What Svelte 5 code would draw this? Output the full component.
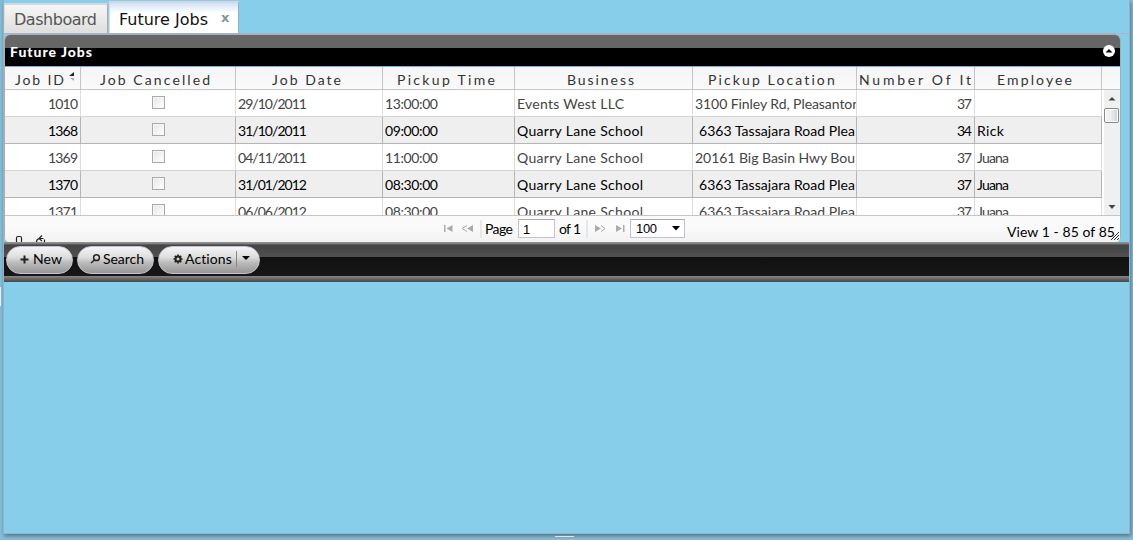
<script>
  const columns = [
    { label: 'Job ID', w: 76, tw: 49, pad: 10 },
    { label: 'Job Cancelled', w: 155, tw: 110, pad: 19 },
    { label: 'Job Date', w: 147, tw: 69, pad: 36 },
    { label: 'Pickup Time', w: 132, tw: 98, pad: 14 },
    { label: 'Business', w: 178, tw: 67, pad: 52 },
    { label: 'Pickup Location', w: 164, tw: 127, pad: 15 },
    { label: 'Number Of It', w: 118, tw: 112, pad: 2 },
    { label: 'Employee', w: 127, tw: 75, pad: 22 }
  ];
  const rows = [
    ['1010', '29/10/2011', '13:00:00', 'Events West LLC', 107, '3100 Finley Rd, Pleasanton', 165, 0, '37', '', 0],
    ['1368', '31/10/2011', '09:00:00', 'Quarry Lane School', 126, '6363 Tassajara Road Plea', 156, 4, '34', 'Rick', 27],
    ['1369', '04/11/2011', '11:00:00', 'Quarry Lane School', 126, '20161 Big Basin Hwy Bou', 160, 0, '37', 'Juana', 32],
    ['1370', '31/01/2012', '08:30:00', 'Quarry Lane School', 126, '6363 Tassajara Road Plea', 156, 4, '37', 'Juana', 32],
    ['1371', '06/06/2012', '08:30:00', 'Quarry Lane School', 126, '6363 Tassajara Road Plea', 156, 4, '37', 'Juana', 32]
  ];
  // Tracks a label out or in so that it occupies the given width.
  function fit(node, width) {
    const n = node.textContent.length;
    if (!n || !width) return;
    const base = node.getBoundingClientRect().width;
    const gap = (width - base) / Math.max(1, n - 1);
    node.style.letterSpacing = gap + 'px';
    node.style.marginRight = -gap + 'px';
  }
</script>

<div class="desk">
  <div class="window">
    <div class="tabs">
      <div class="tab"><span use:fit={83}>Dashboard</span></div>
      <div class="tab active"><span use:fit={89}>Future Jobs</span><b>x</b></div>
    </div>
    <div class="grid">
      <div class="title">
        <span use:fit={82}>Future Jobs</span>
        <svg width="12" height="12"><circle cx="6" cy="6" r="6" fill="#fff" /><path d="M2.500 7.500h7L6 4z" fill="#000" /></svg>
      </div>
      <div class="head">
        {#each columns as c, i}
          <div class="th" style:width="{c.w}px" style:padding-left="{c.pad}px">
            <span use:fit={c.tw}>{c.label}</span>
            {#if i === 0}
              <svg class="sort" width="6" height="10"><path d="M5 0v4H0z" fill="#222" /><path d="M1 6h4v3z" fill="#aaa" /></svg>
            {/if}
          </div>
        {/each}
      </div>
      <div class="body">
        <div class="rows">
          {#each rows as r, i}
            <div class="row" class:alt={i % 2 === 1}>
              <div class="td num" style:width="76px"><span use:fit={30}>{r[0]}</span></div>
              <div class="td check" style:width="155px"><i></i></div>
              <div class="td" style:width="147px"><span use:fit={69}>{r[1]}</span></div>
              <div class="td" style:width="132px"><span use:fit={53}>{r[2]}</span></div>
              <div class="td" style:width="178px"><span use:fit={r[4]}>{r[3]}</span></div>
              <div class="td place" style:width="164px" style:padding-left="{2 + r[7]}px"><span use:fit={r[6]}>{r[5]}</span></div>
              <div class="td num" style:width="118px"><span use:fit={15}>{r[8]}</span></div>
              <div class="td" style:width="127px"><span use:fit={r[10]}>{r[9]}</span></div>
            </div>
          {/each}
        </div>
        <div class="scroll">
          <svg width="16" height="15"><path d="M4.500 10.500h7L8 7z" fill="#444" /></svg>
          <div class="thumb"></div>
          <svg class="down" width="16" height="15"><path d="M4.500 5h7L8 9z" fill="#444" /></svg>
        </div>
      </div>
      <div class="pager">
        <div class="tools">
          <svg width="32" height="7" fill="none" stroke="#222" stroke-width="1.2"><path d="M1.500 7V3q0-1.500 1.500-1.500h2q1.500 0 1.500 1.500v4M21.500 7q0-3 3-3.500h4M27 0.500l-3 3 3 2.500M29.500 4.500V7" /></svg>
        </div>
        <div class="nav">
          <svg width="31" height="10" fill="#aaa"><path d="M1 1h1.500v7H1zM9.500 1v7l-6-3.500zM30 1v7l-6-3.500z" /><path d="M24 1.500l-5 3 5 3" fill="none" stroke="#aaa" /></svg>
          <div class="sep"></div>
          <span class="page" use:fit={28}>Page</span>
          <div class="input">1</div>
          <span class="of" use:fit={22}>of 1</span>
          <div class="sep s2"></div>
          <svg class="next" width="31" height="10" fill="#aaa"><path d="M1 1v7l6-3.500zM22 1v7l6-3.500zM29 1h1.500v7H29z" /><path d="M7 1.500l4 3-4 3" fill="none" stroke="#aaa" /></svg>
          <div class="select"><span use:fit={21}>100</span><svg width="8" height="5"><path d="M0 0h8L4 4.500z" /></svg></div>
        </div>
        <div class="view"><span use:fit={108}>View 1 - 85 of 85</span></div>
        <svg class="grip" width="8" height="8" stroke="#333"><path d="M0 8L8 0M3 8l5-5M6 8l2-2" /></svg>
      </div>
    </div>
    <div class="bar">
      <div class="btn new"><svg width="9" height="9" stroke="#222" stroke-width="2"><path d="M4.500 0.500v8M0.500 4.500h8" /></svg><span use:fit={29}>New</span></div>
      <div class="btn search"><svg width="11" height="10" fill="none" stroke="#222" stroke-width="1.500"><circle cx="6.500" cy="3.700" r="2.900" /><path d="M4.500 6L1 9" /></svg><span use:fit={41}>Search</span></div>
      <div class="btn actions"><svg width="10" height="10" fill="none" stroke="#222"><circle cx="5" cy="5" r="2.500" stroke-width="2" /><path d="M5 .5v2M5 7.500v2M.5 5h2M7.500 5h2M1.800 1.800l1.500 1.500M6.700 6.700l1.500 1.500M1.800 8.200l1.500-1.500M6.700 3.300l1.500-1.500" stroke-width="1.700" /></svg><span use:fit={47}>Actions</span><em></em><svg class="caret" width="8" height="5"><path d="M0 0h8L4 4z" /></svg></div>
    </div>
    <div class="barfoot"></div>
  </div>
  <div class="west"></div>
  <div class="south"></div>
</div>

<style>
  :global(body) { background: #87ceeb; }
  .desk { position: relative; width: 1133px; height: 540px; overflow: hidden; background: #7fc1dc; font: 14px Lato, sans-serif; color: #000; box-sizing: border-box; padding-left: 3px; border-bottom: 1px solid #a5adc0; }
  .desk * { box-sizing: border-box; }
  span { white-space: pre; }
  svg { display: block; flex: none; }
  .window { width: 1127px; height: 534px; background: #87ceeb; border: 1px solid #a5acc2; border-top: 0; box-shadow: 1px 2px 4px #4b7487; }
  .tabs { height: 34px; display: flex; align-items: flex-end; border-bottom: 1px solid #a8b4c9; }
  .tab { width: 104px; height: 30px; margin-right: 1px; border: 1px solid #aaa9b8; border-left-color: #ddd; border-top: 2px solid #d6d6df; background: linear-gradient(#f6f6f6, #dedede); font: 16px/29px "DejaVu Sans", Verdana, sans-serif; color: #555; padding-left: 9px; border-bottom: 0; display: flex; }
  .active { width: 130px; height: 32px; background: linear-gradient(#cfe2f5, #fff 10px); color: #111; line-height: 33px; padding-left: 9px; }
  .active b { font-size: 13px; color: #8b9299; margin-left: 13px; line-height: 30px; }
  .grid { width: 1117px; height: 208px; border: 1px solid #aaadb5; border-bottom: 0; border-radius: 6px 6px 5px 5px; overflow: hidden; background: #fff; margin-top: 0; }
  .title { height: 31px; background: linear-gradient(#666 0 13px, #000 13px); display: flex; align-items: center; padding: 1px 5px 0; color: #fff; font: 900 14px Lato, sans-serif; justify-content: space-between; }
  .head { height: 24px; background: linear-gradient(#f5f5f5, #fafafa); border-top: 1px solid #79b0d8; border-bottom: 1px solid #c5c5c5; display: flex; color: #333; }
  .th { height: 22px; border-right: 1px solid #c5c5c5; line-height: 26px; overflow: hidden; display: flex; flex: none; }
  .sort { margin: 5px 0 0 5px; }
  .body { height: 125px; display: flex; overflow: hidden; }
  .rows { width: 1097px; flex: none; }
  .row { height: 27px; display: flex; color: #444; }
  .td { height: 27px; border-right: 1px solid #ddd; border-bottom: 1px solid #d3d3d3; padding: 0 2px; line-height: 27px; overflow: hidden; flex: none; display: flex; }
  .place { padding-right: 0; }
  .alt { color: #000; }
  .alt .td { background: #efefef; border-color: #b5b5b5; }
  .num { justify-content: flex-end; }
  .check { justify-content: center; padding-top: 6px; }
  .check i { width: 13px; height: 13px; border: 1px solid #aaa; background: linear-gradient(135deg, #e6e6e6, #fff); box-shadow: inset 0 0 0 1px #f6f6f6; }
  .scroll { margin-left: 2px; width: 16px; background: #f0f0f0; display: flex; flex-direction: column; }
  .thumb { width: 15px; height: 15px; margin-top: 3px; border: 1px solid #888; border-radius: 2px; background: linear-gradient(90deg, #f5f5f5, #eee 45%, #cfcfd1); box-shadow: inset 0 0 0 1px #fff; }
  .down { margin-top: auto; }
  .pager { height: 27px; border-top: 1px solid #c5c5c5; background: linear-gradient(#fafafa 45%, #f2f2f2); display: flex; position: relative; overflow: hidden; }
  .tools { width: 438px; padding: 19px 0 0 10px; }
  .nav { width: 544px; display: flex; align-items: center; height: 25px; }
  .nav > span { margin-top: -1px; }
  .sep { width: 2px; height: 18px; background: #e7e7e7; margin-left: 6px; }
  .nav .page { margin-left: 3px; }
  .input, .select { border: 1px solid #c3c0d3; border-top-color: #aaa; background: #fff; height: 19px; line-height: 19px; font-family: "Liberation Sans", Arial, sans-serif; font-size: 13px; padding-left: 4px; }
  .input { margin-left: 5px; width: 37px; }
  .nav .of { margin-left: 4px; }
  .s2 { margin-left: 5px; }
  .next { margin-left: 6px; }
  .select { margin-left: 5px; width: 55px; padding: 0 4px 0 5px; display: flex; align-items: center; justify-content: space-between; }
  .view { padding-top: 7px; margin-left: 20px; }
  .grip { position: absolute; right: 1px; bottom: 2px; }
  .bar { height: 34px; background: linear-gradient(#999, #777 2px, #444 3px, #505050 15px, #111 15px, #171717); display: flex; gap: 4px; padding: 4px 2px 0; }
  .btn { height: 28px; border-radius: 14px; border: 1px solid #c8c3d2; background: linear-gradient(#f5f5f7, #ddd 40%, #bbb 60%, #969696); display: flex; align-items: center; }
  .new { width: 67px; padding-left: 13px; gap: 4px; }
  .search { width: 77px; padding-left: 12px; gap: 2px; }
  .actions { width: 102px; padding-left: 14px; gap: 2px; }
  .btn > svg { margin-top: -2px; }
  .btn span { margin-top: -3px; }
  .actions em { width: 1px; height: 16px; background: #888; margin-left: 2px; margin-top: -2px; }
  .actions .caret { margin: -3px 0 0 3px; }
  .barfoot { height: 6px; background: linear-gradient(#888, #666 3px, #444); }
  .west { position: absolute; left: 0; top: 287px; width: 1px; height: 19px; background: #eee; }
  .south { position: absolute; left: 555px; top: 536px; width: 19px; height: 1px; background: #e4e4e4; }
</style>
